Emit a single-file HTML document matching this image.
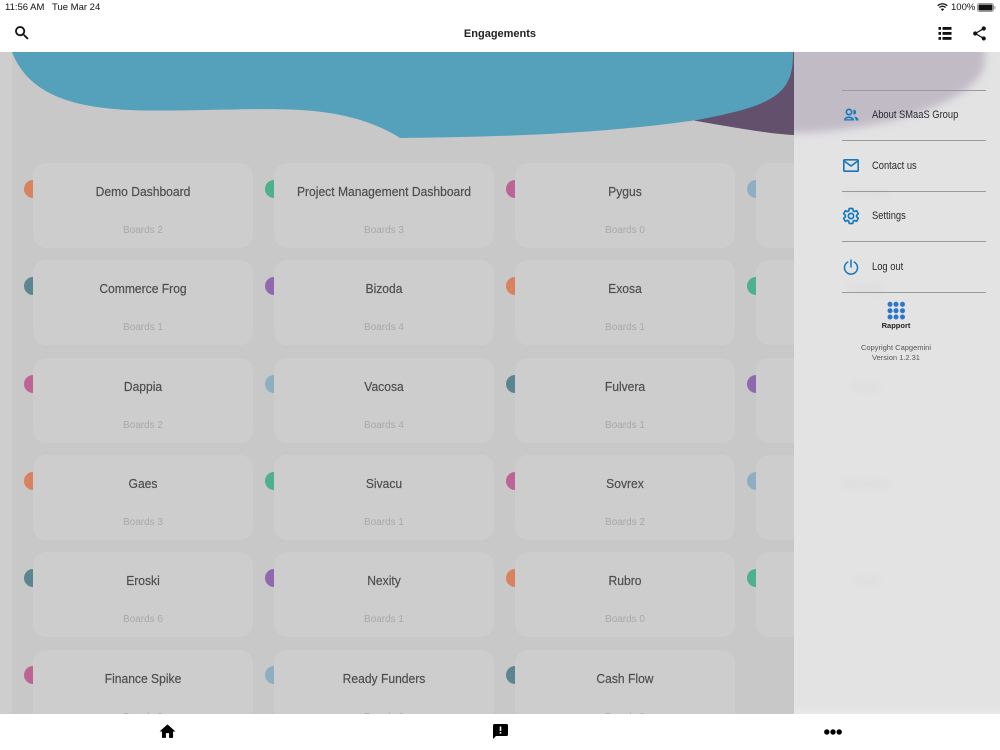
<!DOCTYPE html>
<html><head><meta charset="utf-8">
<style>
html,body{margin:0;padding:0}
body{width:1000px;height:750px;overflow:hidden;position:relative;background:#c8c8c8;font-family:"Liberation Sans",sans-serif;}
.abs{position:absolute}
#strip{left:0;top:52px;width:12px;height:662px;background:#cecece}
.card{position:absolute;width:220px;height:85px;background:#cdcdcd;border-radius:13px;text-align:center;}
.card b{position:absolute;left:0;right:0;top:20.500px;font-weight:normal;font-size:13px;line-height:16px;color:#4e4e4e;-webkit-text-stroke:.2px #4e4e4e;white-space:nowrap;transform:scaleX(.93)}
.card i{position:absolute;left:0;right:0;top:60px;font-style:normal;font-size:10.500px;line-height:14px;color:#a8a8a8;transform:scaleX(.95)}
.dot{position:absolute;width:18px;height:18px;border-radius:50%}
#panel{left:794px;top:52px;width:206px;height:662px;background:rgba(229,229,231,.9);-webkit-backdrop-filter:blur(4px);backdrop-filter:blur(4px)}
.line{position:absolute;left:842px;width:144px;height:1px;background:#9a9a9c}
.mi{position:absolute;left:872px;font-size:11px;line-height:14px;color:#2a2a2e;white-space:nowrap;transform:scaleX(.85);transform-origin:0 0}
.c{position:absolute;text-align:center;white-space:nowrap}
#top{left:0;top:0;width:1000px;height:52px;background:#fff}
#bot{left:0;top:714px;width:1000px;height:36px;background:#fff}
svg{position:absolute;display:block}
</style></head><body>
<div class="abs" id="strip"></div>
<svg style="left:0;top:52px" width="794" height="120" viewBox="0 52 794 120">
<path fill="#63506c" d="M680 118C730 127 770 134 794 135L794 52L680 52Z"/>
<path fill="#55a0bb" d="M12 52C30 98 80 110 150 110.500C200 111 250 108 290 109.500C340 111 375 122 400 138C500 137 600 134 697 120C770 106 793 96 793 55L793 52Z"/>
</svg>

<div class="dot" style="left:24px;top:180px;background:#d8825f"></div><div class="card" style="left:33px;top:163px"><b>Demo Dashboard</b><i>Boards 2</i></div>
<div class="dot" style="left:265px;top:180px;background:#4fb08c"></div><div class="card" style="left:274px;top:163px"><b>Project Management Dashboard</b><i>Boards 3</i></div>
<div class="dot" style="left:506px;top:180px;background:#bd6496"></div><div class="card" style="left:515px;top:163px"><b>Pygus</b><i>Boards 0</i></div>
<div class="dot" style="left:747px;top:180px;background:#8eafc2"></div><div class="card" style="left:756px;top:163px"><b>Zoomba</b><i>Boards 1</i></div>

<div class="dot" style="left:24px;top:277px;background:#5c8592"></div><div class="card" style="left:33px;top:260px"><b>Commerce Frog</b><i>Boards 1</i></div>
<div class="dot" style="left:265px;top:277px;background:#9068b0"></div><div class="card" style="left:274px;top:260px"><b>Bizoda</b><i>Boards 4</i></div>
<div class="dot" style="left:506px;top:277px;background:#d8825f"></div><div class="card" style="left:515px;top:260px"><b>Exosa</b><i>Boards 1</i></div>
<div class="dot" style="left:747px;top:277px;background:#4fb08c"></div><div class="card" style="left:756px;top:260px"><b>Trustify</b><i>Boards 2</i></div>

<div class="dot" style="left:24px;top:374.500px;background:#bd6496"></div><div class="card" style="left:33px;top:358px"><b>Dappia</b><i>Boards 2</i></div>
<div class="dot" style="left:265px;top:374.500px;background:#8eafc2"></div><div class="card" style="left:274px;top:358px"><b>Vacosa</b><i>Boards 4</i></div>
<div class="dot" style="left:506px;top:374.500px;background:#5c8592"></div><div class="card" style="left:515px;top:358px"><b>Fulvera</b><i>Boards 1</i></div>
<div class="dot" style="left:747px;top:374.500px;background:#9068b0"></div><div class="card" style="left:756px;top:358px"><b>Ryne</b><i>Boards 3</i></div>

<div class="dot" style="left:24px;top:471.500px;background:#d8825f"></div><div class="card" style="left:33px;top:455px"><b>Gaes</b><i>Boards 3</i></div>
<div class="dot" style="left:265px;top:471.500px;background:#4fb08c"></div><div class="card" style="left:274px;top:455px"><b>Sivacu</b><i>Boards 1</i></div>
<div class="dot" style="left:506px;top:471.500px;background:#bd6496"></div><div class="card" style="left:515px;top:455px"><b>Sovrex</b><i>Boards 2</i></div>
<div class="dot" style="left:747px;top:471.500px;background:#8eafc2"></div><div class="card" style="left:756px;top:455px"><b>Workflow</b><i>Boards 2</i></div>

<div class="dot" style="left:24px;top:569px;background:#5c8592"></div><div class="card" style="left:33px;top:552px"><b>Eroski</b><i>Boards 6</i></div>
<div class="dot" style="left:265px;top:569px;background:#9068b0"></div><div class="card" style="left:274px;top:552px"><b>Nexity</b><i>Boards 1</i></div>
<div class="dot" style="left:506px;top:569px;background:#d8825f"></div><div class="card" style="left:515px;top:552px"><b>Rubro</b><i>Boards 0</i></div>
<div class="dot" style="left:747px;top:569px;background:#4fb08c"></div><div class="card" style="left:756px;top:552px"><b>Yotel</b><i>Boards 1</i></div>

<div class="dot" style="left:24px;top:666px;background:#bd6496"></div><div class="card" style="left:33px;top:650px"><b>Finance Spike</b><i>Boards 0</i></div>
<div class="dot" style="left:265px;top:666px;background:#8eafc2"></div><div class="card" style="left:274px;top:650px"><b>Ready Funders</b><i>Boards 0</i></div>
<div class="dot" style="left:506px;top:666px;background:#5c8592"></div><div class="card" style="left:515px;top:650px"><b>Cash Flow</b><i>Boards 0</i></div>

<div class="abs" id="panel"></div>
<svg style="left:794px;top:52px" width="206" height="100" viewBox="794 52 206 100">
<defs><filter id="bl" x="-20%" y="-20%" width="140%" height="140%"><feGaussianBlur stdDeviation="4"/></filter></defs>
<path fill="#c1bbc6" filter="url(#bl)" d="M780 40L780 133C880 135 985 100 985 60L985 40Z"/>
</svg>
<div class="abs" style="left:794px;top:705px;width:206px;height:9px;background:linear-gradient(to bottom,rgba(232,232,234,0),#e8e8ea)"></div>
<div class="line" style="top:90px"></div>
<div class="line" style="top:140px"></div>
<div class="line" style="top:191px"></div>
<div class="line" style="top:241px"></div>
<div class="line" style="top:292px"></div>
<div class="mi" style="top:108px">About SMaaS Group</div>
<div class="mi" style="top:159px">Contact us</div>
<div class="mi" style="top:209px">Settings</div>
<div class="mi" style="top:260px">Log out</div>

<svg style="left:843px;top:107px" width="16" height="16" viewBox="0 0 16 16" fill="#1578bc"><circle cx="6" cy="5" r="2.700" fill="none" stroke="#1578bc" stroke-width="1.600"/><path d="M10.500 2.500a2.600 2.600 0 0 1 0 5.200z"/><path d="M1 13.500C1 10.500 3.500 9.500 6 9.500S11 10.500 11 13.500H9.500C9 11.800 7.500 11 6 11S3 11.800 2.500 12.200H9.500V13.500z"/><path d="M11 9.500C13.500 9.800 15.500 11 15.500 13.500H12.700C12.700 11.800 12 10.500 11 9.500z"/></svg>
<svg style="left:843px;top:159px" width="16" height="13" viewBox="0 0 16 13" fill="none" stroke="#1578bc" stroke-width="1.600"><rect x=".8" y=".8" width="14.400" height="11.400" rx="1"/><path d="M1.200 2L8 7L14.800 2"/></svg>
<svg style="left:842px;top:207px" width="18" height="18" viewBox="0 0 24 24" fill="none" stroke="#1578bc" stroke-width="2.200"><path d="M19.430 12.980c.04-.32.07-.64.07-.98s-.03-.66-.07-.98l2.110-1.650c.19-.15.24-.42.12-.64l-2-3.460c-.12-.22-.39-.3-.61-.22l-2.490 1c-.52-.4-1.080-.73-1.690-.98l-.38-2.650C14.460 2.180 14.250 2 14 2h-4c-.25 0-.46.18-.49.42l-.38 2.650c-.61.25-1.170.59-1.690.98l-2.490-1c-.23-.09-.49 0-.61.22l-2 3.460c-.13.22-.07.49.12.64l2.110 1.650c-.04.32-.07.65-.07.98s.03.66.07.98l-2.110 1.650c-.19.15-.24.42-.12.64l2 3.460c.12.22.39.3.61.22l2.490-1c.52.4 1.080.73 1.690.98l.38 2.650c.03.24.24.42.49.42h4c.25 0 .46-.18.49-.42l.38-2.650c.61-.25 1.170-.59 1.690-.98l2.490 1c.23.09.49 0 .61-.22l2-3.460c.12-.22.07-.49-.12-.64l-2.110-1.650z"/><circle cx="12" cy="12" r="3.500"/></svg>
<svg style="left:843px;top:259px" width="16" height="16" viewBox="0 0 16 16" fill="none" stroke="#1578bc" stroke-width="1.500" stroke-linecap="round"><path d="M8 1V8"/><path d="M4.800 3A6.500 6.500 0 1 0 11.200 3"/></svg>

<svg style="left:886px;top:301px" width="20" height="20" viewBox="0 0 20 20" fill="#2a76cc"><circle cx="4" cy="3.300" r="2.500"/><circle cx="10" cy="3.300" r="2.500"/><circle cx="16.500" cy="3.300" r="2.500"/><circle cx="4" cy="9.700" r="2.500"/><circle cx="10" cy="9.700" r="2.500"/><circle cx="16.500" cy="9.700" r="2.500"/><circle cx="4" cy="16" r="2.500"/><circle cx="10" cy="16" r="2.500"/><circle cx="16.500" cy="16" r="2.500"/></svg>
<div class="c" style="left:846px;width:100px;top:321px;font-size:7.500px;line-height:10px;font-weight:bold;color:#222">Rapport</div>
<div class="c" style="left:846px;width:100px;top:343px;font-size:7.500px;line-height:10px;color:#555">Copyright Capgemini</div>
<div class="c" style="left:846px;width:100px;top:353px;font-size:7.500px;line-height:10px;color:#555">Version 1.2.31</div>

<div class="abs" id="top"></div>
<div class="abs" id="bot"></div>

<div class="abs" style="left:5px;top:2px;font-size:9.500px;line-height:11px;color:#111;white-space:nowrap">11:56 AM</div>
<div class="abs" style="left:52px;top:2px;font-size:9.500px;line-height:11px;color:#111;white-space:nowrap">Tue Mar 24</div>
<div class="abs" style="left:951px;top:2px;font-size:9.500px;line-height:11px;color:#111;white-space:nowrap">100%</div>
<svg style="left:937px;top:3px" width="11" height="8" viewBox="0 0 11 8" fill="none" stroke="#111" stroke-width="1.300"><path d="M.7 2.800A7 7 0 0 1 10.300 2.800"/><path d="M2.400 4.500A4.500 4.500 0 0 1 8.600 4.500"/><path d="M5.500 8L3.900 6.200A2.300 2.300 0 0 1 7.100 6.200Z" fill="#111" stroke="none"/></svg>
<svg style="left:977px;top:3px" width="19" height="9" viewBox="0 0 19 9"><rect x=".5" y=".5" width="16" height="8" rx="2" fill="none" stroke="#999"/><rect x="1.500" y="1.500" width="14" height="6" rx="1" fill="#111"/><rect x="17.400" y="3" width="1" height="3" fill="#999"/></svg>

<div class="c" style="left:400px;width:200px;top:27px;font-size:11px;line-height:14px;font-weight:bold;color:#222;">Engagements</div>

<svg style="left:12.500px;top:23.500px" width="18" height="18" viewBox="0 0 24 24" fill="#111" stroke="#111" stroke-width=".5"><path d="M15.500 14h-.79l-.28-.27A6.471 6.471 0 0 0 16 9.500 6.500 6.500 0 1 0 9.500 16c1.610 0 3.090-.59 4.230-1.570l.27.28v.79l5 4.990L20.490 19l-4.990-5zm-6 0C7.010 14 5 11.990 5 9.500S7.010 5 9.500 5 14 7.010 14 9.500 11.990 14 9.500 14z"/></svg>
<svg style="left:938px;top:27px" width="14" height="13" viewBox="0 0 14 13" fill="#111"><rect x=".5" y="0" width="2.500" height="2.800"/><rect x="4.500" y="0" width="9" height="2.800"/><rect x=".5" y="5" width="2.500" height="2.800"/><rect x="4.500" y="5" width="9" height="2.800"/><rect x=".5" y="10" width="2.500" height="2.800"/><rect x="4.500" y="10" width="9" height="2.800"/></svg>
<svg style="left:970.500px;top:24.500px" width="17" height="17" viewBox="0 0 24 24" fill="#111"><path d="M18 16.080c-.76 0-1.440.3-1.960.77L8.910 12.700c.05-.23.09-.46.09-.7s-.04-.47-.09-.7l7.050-4.110c.54.5 1.250.81 2.040.81 1.660 0 3-1.340 3-3s-1.340-3-3-3-3 1.340-3 3c0 .24.04.47.09.7L8.040 9.810C7.500 9.310 6.790 9 6 9c-1.660 0-3 1.340-3 3s1.340 3 3 3c.79 0 1.500-.31 2.040-.81l7.120 4.160c-.05.21-.08.43-.08.65 0 1.610 1.310 2.920 2.920 2.920 1.610 0 2.920-1.310 2.920-2.920s-1.310-2.920-2.920-2.920z"/></svg>

<svg style="left:157.500px;top:722px" width="19" height="19" viewBox="0 0 24 24" fill="#000"><path d="M10 20v-6h4v6h5v-8h3L12 3 2 12h3v8z"/></svg>
<svg style="left:492.500px;top:724px" width="15" height="15" viewBox="0 0 15 15"><path fill="#000" d="M1.500 0H13.500A1.500 1.500 0 0 1 15 1.500V10.500A1.500 1.500 0 0 1 13.500 12H3L0 15V1.500A1.500 1.500 0 0 1 1.500 0Z"/><rect x="6.700" y="2.500" width="1.600" height="4.500" fill="#fff"/><rect x="6.700" y="8" width="1.600" height="1.600" fill="#fff"/></svg>
<svg style="left:824px;top:729px" width="18" height="6" viewBox="0 0 18 6" fill="#000"><circle cx="2.800" cy="3" r="2.700"/><circle cx="9" cy="3" r="2.700"/><circle cx="15.200" cy="3" r="2.700"/></svg>
</body></html>
